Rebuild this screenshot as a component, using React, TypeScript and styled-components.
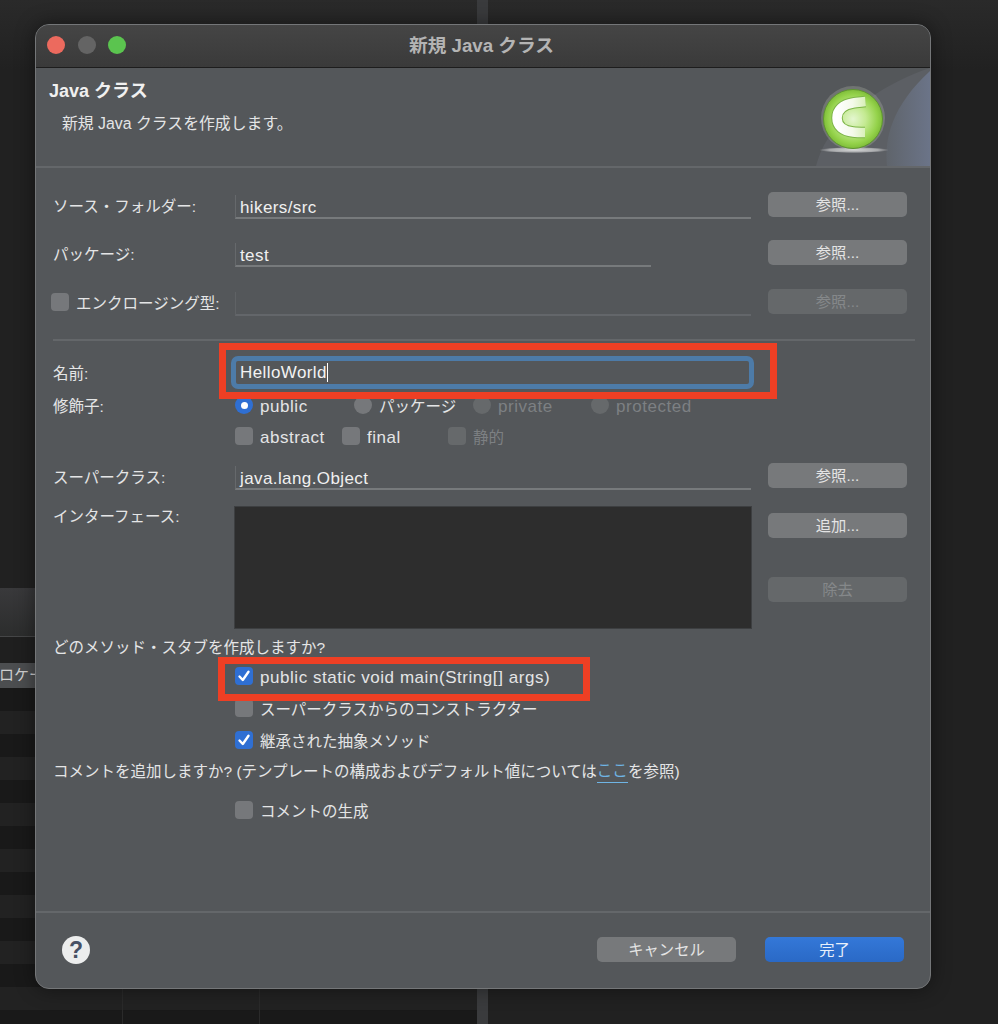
import React from "react";
import styled, { createGlobalStyle } from "styled-components";

const GlobalStyle = createGlobalStyle`
  html, body {
    margin: 0;
    padding: 0;
    background: #222;
  }
`;

const FONT = `"Liberation Sans", "Noto Sans CJK JP", sans-serif`;

const Desktop = styled.div`
  position: relative;
  width: 998px;
  height: 1024px;
  display: flex;
  overflow: hidden;
  font-family: ${FONT};
  background: linear-gradient(#2a2a2a, #212121 70px);
`;

const LeftPane = styled.div`
  width: 477px;
  padding-top: 588px;
  box-sizing: border-box;
  display: flex;
  flex-direction: column;
`;

const PaneHeader = styled.div`
  height: 49px;
  box-sizing: border-box;
  background: linear-gradient(#39393b, #2c2d2d);
  border-bottom: 1px solid #454647;
`;

const PaneGap = styled.div`
  height: 26px;
  background: #1f1f1f;
`;

const PaneTab = styled.div`
  height: 25px;
  background: #4c4e50;
  color: #d0d0d0;
  font-size: 15px;
  line-height: 24px;
  white-space: nowrap;
  text-indent: -16px;
`;

const Stripes = styled.div`
  flex: 1;
  background:
    linear-gradient(#2a2a2a, #2a2a2a) 122px 0 / 1px 100% no-repeat,
    linear-gradient(#2a2a2a, #2a2a2a) 259px 0 / 1px 100% no-repeat,
    repeating-linear-gradient(#191919 0 23px, #222222 23px 46px);
`;

const PaneDivider = styled.div`
  width: 11px;
  background: #3a3b3d;
`;

const RightPane = styled.div`
  flex: 1;
`;

const Dialog = styled.div`
  position: absolute;
  left: 35px;
  top: 24px;
  width: 896px;
  height: 965px;
  box-sizing: border-box;
  border: 1px solid #747678;
  border-radius: 14px;
  background: #54575a;
  color: #e4e5e6;
  display: flex;
  flex-direction: column;
  overflow: hidden;
  box-shadow: 0 0 20px rgba(0, 0, 0, 0.45);
`;

const TitleBar = styled.div`
  position: relative;
  flex: none;
  height: 43px;
  box-sizing: border-box;
  padding: 0 3px 5px 0;
  display: flex;
  align-items: center;
  justify-content: center;
  background: linear-gradient(#454545, #3a3a3a);
  border-bottom: 1px solid #1d1d1d;
`;

const Lights = styled.div`
  position: absolute;
  left: 11px;
  top: 11px;
  display: flex;
  gap: 12.5px;
`;

const Light = styled.span<{ $color: string }>`
  width: 18px;
  height: 18px;
  border-radius: 50%;
  background: ${(p) => p.$color};
`;

const Title = styled.div`
  font-size: 18.7px;
  font-weight: 700;
  color: #b4b4b4;
`;

const Banner = styled.div`
  flex: none;
  height: 100px;
  box-sizing: border-box;
  display: flex;
  justify-content: space-between;
  border-bottom: 2px solid #64676a;
`;

const BannerText = styled.div`
  padding: 12px 0 0 13px;
`;

const BannerTitle = styled.div`
  font-size: 18px;
  line-height: 22px;
  font-weight: 700;
  color: #f0f0f0;
`;

const BannerSub = styled.div`
  margin: 12px 0 0 13px;
  font-size: 15.85px;
  line-height: 20px;
`;

const Form = styled.div`
  flex: 1;
  padding: 24px 0 0 17px;
  font-size: 15.5px;
`;

const Row = styled.div<{ $top?: number; $height?: number }>`
  display: grid;
  grid-template-columns: 182px 533px 139px;
  grid-template-rows: minmax(0, 1fr);
  align-items: center;
  margin-top: ${(p) => p.$top ?? 0}px;
  height: ${(p) => p.$height ?? 25}px;
`;

const Label = styled.div`
  white-space: nowrap;
`;

const TopLabel = styled(Label)`
  align-self: start;
  line-height: 22px;
`;

const Field = styled.div<{ $width?: number; $disabled?: boolean }>`
  width: ${(p) => p.$width ?? 516}px;
  height: 24px;
  margin-top: 4px;
  box-sizing: border-box;
  padding-left: 4px;
  font-size: 17px;
  letter-spacing: 0.4px;
  line-height: 25px;
  color: #f0f0f0;
  border-left: 1px solid ${(p) => (p.$disabled ? "#5f6265" : "#66696c")};
  border-bottom: 2px solid ${(p) => (p.$disabled ? "#63666a" : "#777a7c")};
`;

const FocusField = styled.div`
  width: 513px;
  height: 23px;
  margin-left: 1px;
  box-sizing: border-box;
  padding-left: 4px;
  font-size: 17px;
  letter-spacing: 0.4px;
  line-height: 23px;
  color: #f2f2f2;
  outline: 5px solid #4d7ba8;
  border-radius: 2px;
`;

const Caret = styled.span`
  display: inline-block;
  width: 1px;
  height: 19px;
  background: #fff;
  vertical-align: -4px;
`;

const PushButton = styled.button<{ $disabled?: boolean; $primary?: boolean }>`
  width: 139px;
  height: 25px;
  padding: 0;
  border: none;
  border-radius: 5px;
  font-family: ${FONT};
  font-size: 15.3px;
  line-height: 25px;
  background: ${(p) =>
    p.$primary
      ? "linear-gradient(#3478d8, #2a69c6)"
      : p.$disabled
      ? "#65686a"
      : "#77797b"};
  color: ${(p) => (p.$primary ? "#e8f0fb" : p.$disabled ? "#85888a" : "#e4e4e4")};
`;

const Separator = styled.div<{ $top: number }>`
  margin: ${(p) => p.$top}px 15px 0 0;
  height: 2px;
  background: #64676a;
`;

const ControlRow = styled.div<{ $top: number }>`
  display: flex;
  align-items: center;
  height: 20px;
  margin: ${(p) => p.$top}px 0 0 182px;
`;

const InlineRow = styled.div<{ $top: number }>`
  display: flex;
  align-items: center;
  height: 20px;
  margin-top: ${(p) => p.$top}px;
  white-space: nowrap;
`;

const ModifierLabel = styled.div`
  width: 182px;
`;

const Option = styled.div<{ $width?: number; $disabled?: boolean }>`
  display: flex;
  align-items: center;
  gap: 7px;
  width: ${(p) => (p.$width ? `${p.$width}px` : "auto")};
  flex: none;
  font-size: 15.5px;
  white-space: nowrap;
  color: ${(p) => (p.$disabled ? "#7d8083" : "inherit")};
`;

const EnclosingOption = styled(Option)`
  margin-left: -2px;
`;

const LatinText = styled.span`
  font-size: 17px;
  letter-spacing: 0.55px;
  padding-top: 3px;
`;

const Radio = styled.span<{ $checked?: boolean; $disabled?: boolean }>`
  width: 18px;
  height: 18px;
  flex: none;
  border-radius: 50%;
  display: flex;
  align-items: center;
  justify-content: center;
  background: ${(p) =>
    p.$checked ? "#2f6fd3" : p.$disabled ? "#66696b" : "#76787b"};

  &::after {
    content: "";
    display: ${(p) => (p.$checked ? "block" : "none")};
    width: 7px;
    height: 7px;
    border-radius: 50%;
    background: #fff;
  }
`;

const Box = styled.span<{ $checked?: boolean; $disabled?: boolean }>`
  width: 18px;
  height: 18px;
  flex: none;
  border-radius: 4px;
  display: flex;
  align-items: center;
  justify-content: center;
  background: ${(p) =>
    p.$checked ? "#2f6fd3" : p.$disabled ? "#66696b" : "#76787b"};
`;

const InterfaceList = styled.div`
  width: 518px;
  margin-left: -1px;
  height: 123px;
  background: #2d2d2d;
  border: 1px solid #3d3f41;
  box-sizing: border-box;
`;

const InterfaceButtons = styled.div`
  align-self: start;
  padding-top: 7px;
  display: flex;
  flex-direction: column;
  gap: 39px;
`;

const LinkText = styled.span`
  color: #6fb4e4;
  border-bottom: 1px solid #6fb4e4;
  padding-bottom: 2px;
`;

const Footer = styled.div`
  flex: none;
  height: 77px;
  box-sizing: border-box;
  border-top: 2px solid #64676a;
  padding: 0 26px 2px 26px;
  display: flex;
  align-items: center;
  justify-content: space-between;
`;

const HelpIcon = styled.div`
  width: 28px;
  height: 28px;
  border-radius: 50%;
  background: #eceded;
  color: #475064;
  font-size: 23px;
  font-weight: 700;
  line-height: 28px;
  text-align: center;
`;

const FooterButtons = styled.div`
  display: flex;
  gap: 29px;
`;

const RedBox = styled.div<{ $left: number; $top: number; $width: number; $height: number }>`
  position: absolute;
  left: ${(p) => p.$left}px;
  top: ${(p) => p.$top}px;
  width: ${(p) => p.$width}px;
  height: ${(p) => p.$height}px;
  box-sizing: border-box;
  border: 7px solid #ee3f24;
  pointer-events: none;
`;

function Check() {
  return (
    <svg width="14" height="14" viewBox="0 0 14 14" fill="none">
      <path d="M2.5 7.5 L5.8 11 L11.5 2.8" stroke="#fff" strokeWidth="2.4" strokeLinecap="round" strokeLinejoin="round" />
    </svg>
  );
}

const C_PATH = "M49.5 33.5 C44 34 41 34.5 37 35 C27 36.5 21 42 21 50 C21 58 27 63 37 64 C41 64.5 44 64.5 49 64.5";

function ClassLogo() {
  return (
    <svg width="114" height="98" viewBox="0 0 114 98" style={{ flex: "none" }}>
      <defs>
        <radialGradient id="ball" cx="50%" cy="50%" r="52%">
          <stop offset="0%" stopColor="#e4f6d0" />
          <stop offset="42%" stopColor="#c4ea92" />
          <stop offset="80%" stopColor="#94d24a" />
          <stop offset="100%" stopColor="#7ab836" />
        </radialGradient>
        <linearGradient id="swoosh" x1="0" y1="0" x2="1" y2="0">
          <stop offset="0%" stopColor="#5f646b" />
          <stop offset="100%" stopColor="#6b7488" />
        </linearGradient>
        <linearGradient id="letter" x1="0" y1="0" x2="1" y2="0">
          <stop offset="0%" stopColor="#ffffff" />
          <stop offset="55%" stopColor="#f4faea" />
          <stop offset="100%" stopColor="#d8f0b8" />
        </linearGradient>
        <radialGradient id="floor">
          <stop offset="0%" stopColor="#d8d9d9" />
          <stop offset="70%" stopColor="#c8c9ca" stopOpacity="0.7" />
          <stop offset="100%" stopColor="#c8c9ca" stopOpacity="0" />
        </radialGradient>
      </defs>
      <path d="M0 98 C4 84 8 76 14 68 C30 44 70 14 114 0 L114 98 Z" fill="#5c5f64" />
      <path d="M71 98 C68 70 76 38 114 3 L114 98 Z" fill="url(#swoosh)" />
      <ellipse cx="38" cy="82" rx="35" ry="3" fill="url(#floor)" />
      <circle cx="37" cy="50" r="32" fill="#f2f8e4" opacity="0.18" />
      <circle cx="37" cy="51" r="29.5" fill="url(#ball)" stroke="#5e9430" strokeWidth="1" />
      <path d={C_PATH} fill="none" stroke="#7db548" strokeWidth="11.5" />
      <path d={C_PATH} fill="none" stroke="url(#letter)" strokeWidth="9.5" />
    </svg>
  );
}

export default function App() {
  return (
    <>
      <GlobalStyle />
      <Desktop>
        <LeftPane>
          <PaneHeader />
          <PaneGap />
          <PaneTab>プロケーション</PaneTab>
          <Stripes />
        </LeftPane>
        <PaneDivider />
        <RightPane />

        <Dialog>
          <TitleBar>
            <Lights>
              <Light $color="#ec6a5e" />
              <Light $color="#646464" />
              <Light $color="#5bc44f" />
            </Lights>
            <Title>新規 Java クラス</Title>
          </TitleBar>

          <Banner>
            <BannerText>
              <BannerTitle>Java クラス</BannerTitle>
              <BannerSub>新規 Java クラスを作成します。</BannerSub>
            </BannerText>
            <ClassLogo />
          </Banner>

          <Form>
            <Row>
              <Label>ソース・フォルダー:</Label>
              <Field>hikers/src</Field>
              <PushButton>参照...</PushButton>
            </Row>
            <Row $top={23}>
              <Label>パッケージ:</Label>
              <Field $width={416}>test</Field>
              <PushButton>参照...</PushButton>
            </Row>
            <Row $top={24}>
              <EnclosingOption>
                <Box />
                エンクロージング型:
              </EnclosingOption>
              <Field $disabled />
              <PushButton $disabled>参照...</PushButton>
            </Row>

            <Separator $top={25} />

            <Row $top={19} $height={24}>
              <Label>名前:</Label>
              <FocusField>
                HelloWorld
                <Caret />
              </FocusField>
            </Row>

            <InlineRow $top={11}>
              <ModifierLabel>修飾子:</ModifierLabel>
              <Option $width={119}>
                <Radio $checked />
                <LatinText>public</LatinText>
              </Option>
              <Option $width={119}>
                <Radio />
                パッケージ
              </Option>
              <Option $width={118} $disabled>
                <Radio $disabled />
                <LatinText>private</LatinText>
              </Option>
              <Option $disabled>
                <Radio $disabled />
                <LatinText>protected</LatinText>
              </Option>
            </InlineRow>

            <ControlRow $top={11}>
              <Option $width={107}>
                <Box />
                <LatinText>abstract</LatinText>
              </Option>
              <Option $width={106}>
                <Box />
                <LatinText>final</LatinText>
              </Option>
              <Option $disabled>
                <Box $disabled />
                静的
              </Option>
            </ControlRow>

            <Row $top={17}>
              <Label>スーパークラス:</Label>
              <Field>java.lang.Object</Field>
              <PushButton>参照...</PushButton>
            </Row>

            <Row $top={18} $height={123}>
              <TopLabel>インターフェース:</TopLabel>
              <InterfaceList />
              <InterfaceButtons>
                <PushButton>追加...</PushButton>
                <PushButton $disabled>除去</PushButton>
              </InterfaceButtons>
            </Row>

            <InlineRow $top={7}>どのメソッド・スタブを作成しますか?</InlineRow>

            <ControlRow $top={10}>
              <Option>
                <Box $checked>
                  <Check />
                </Box>
                <LatinText>public static void main(String[] args)</LatinText>
              </Option>
            </ControlRow>
            <ControlRow $top={12}>
              <Option>
                <Box />
                スーパークラスからのコンストラクター
              </Option>
            </ControlRow>
            <ControlRow $top={12}>
              <Option>
                <Box $checked>
                  <Check />
                </Box>
                継承された抽象メソッド
              </Option>
            </ControlRow>

            <InlineRow $top={10}>
              コメントを追加しますか? (テンプレートの構成およびデフォルト値については
              <LinkText>ここ</LinkText>を参照)
            </InlineRow>

            <ControlRow $top={20}>
              <Option>
                <Box />
                コメントの生成
              </Option>
            </ControlRow>
          </Form>

          <Footer>
            <HelpIcon>?</HelpIcon>
            <FooterButtons>
              <PushButton>キャンセル</PushButton>
              <PushButton $primary>完了</PushButton>
            </FooterButtons>
          </Footer>

          <RedBox $left={183} $top={318} $width={558} $height={56} />
          <RedBox $left={182} $top={632} $width={372} $height={44} />
        </Dialog>
      </Desktop>
    </>
  );
}
